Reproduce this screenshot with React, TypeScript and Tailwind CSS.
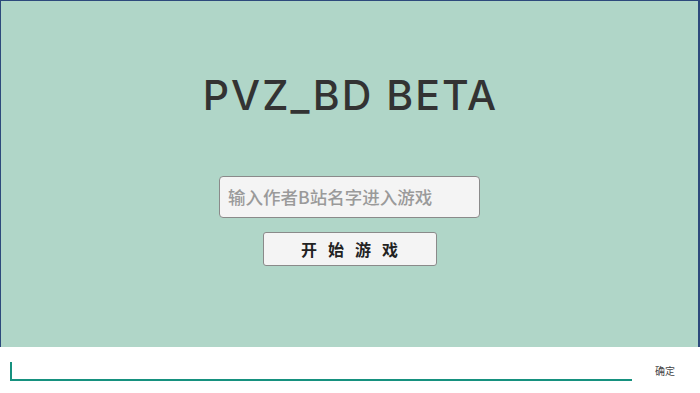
import React from "react";

export default function App() {
  return (
    <div className="w-[700px] h-[393px] flex flex-col bg-white overflow-hidden" style={{ fontFamily: '"Liberation Sans", "Noto Sans CJK SC", sans-serif' }}>
      <div className="h-[347px] flex flex-col items-center bg-[#b0d6c8] border-t border-l border-r-2 border-[#2d4a7c]">
        <h1 className="mt-[73px] text-[41px] leading-[43px] font-medium text-[#333333] tracking-[2px] pl-[2px]" style={{ fontFamily: 'Inter, sans-serif' }}>PVZ_BD BETA</h1>
        <div className="mt-[59px] w-[261px] h-[42px] flex items-center pl-[8px] bg-[#f4f4f4] border border-[#8a8a8a] rounded-[4px]">
          <span className="text-[17.5px] font-medium text-[#9a9a9a]" style={{ fontFamily: '"Noto Sans CJK SC", sans-serif' }}>输入作者B站名字进入游戏</span>
        </div>
        <div className="mt-[14px] w-[174px] h-[34px] flex items-center justify-center bg-[#f4f4f4] border border-[#8a8a8a] rounded-[3px]">
          <span className="text-[16px] font-semibold text-[#222222] tracking-[11px] pl-[11px]" style={{ fontFamily: '"Noto Sans CJK SC", sans-serif' }}>开始游戏</span>
        </div>
      </div>
      <div className="flex-1 flex items-start">
        <div className="ml-[10px] mt-[15px] w-[622px] h-[19px] border-b-2 border-[#16917f] relative">
          <div className="w-[2px] h-[17px] bg-[#16917f]" />
        </div>
        <span className="ml-[23px] mt-[16px] text-[10px] text-[#444444]" style={{ fontFamily: '"Noto Sans CJK SC", sans-serif' }}>确定</span>
      </div>
    </div>
  );
}
